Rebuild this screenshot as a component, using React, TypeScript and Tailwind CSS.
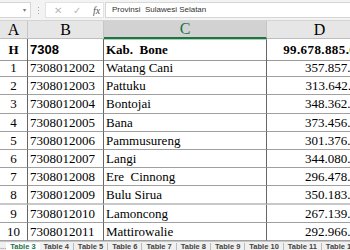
import React from "react";

const rows = [
  ["1", "7308012002", "Watang Cani", "357.857.214"],
  ["2", "7308012003", "Pattuku", "313.642.118"],
  ["3", "7308012004", "Bontojai", "348.362.905"],
  ["4", "7308012005", "Bana", "373.456.310"],
  ["5", "7308012006", "Pammusureng", "301.376.842"],
  ["6", "7308012007", "Langi", "344.080.127"],
  ["7", "7308012008", "Ere  Cinnong", "296.478.653"],
  ["8", "7308012009", "Bulu Sirua", "350.183.479"],
  ["9", "7308012010", "Lamoncong", "267.139.566"],
  ["10", "7308012011", "Mattirowalie", "292.966.031"],
];

const tabs = ["Table 4", "Table 5", "Table 6", "Table 7", "Table 8", "Table 9", "Table 10", "Table 11", "Table 12"];

const cols = "grid grid-cols-[28px_76px_163px_105px]";
const serif = "font-['Liberation_Serif',serif]";

export default function App() {
  return (
    <div className="w-[350px] h-[250px] overflow-hidden bg-white flex flex-col text-black">
      {/* formula bar */}
      <div className="h-[21px] shrink-0 bg-[#f3f3f3] flex items-center border-b border-[#d4d4d4] font-['Liberation_Sans',sans-serif]">
        <div className="w-[31px] h-[16px] bg-white border border-l-0 border-[#d6d6d6] flex items-center justify-end pr-[4px] text-[6px] text-[#777]">▾</div>
        <div className="w-[14px] flex flex-col items-center gap-[2px]">
          <span className="w-[1px] h-[1px] bg-[#aaa]" />
          <span className="w-[1px] h-[1px] bg-[#aaa]" />
          <span className="w-[1px] h-[1px] bg-[#aaa]" />
        </div>
        <div className="w-[59px] h-[16px] bg-white border border-[#e2e2e2] flex items-center text-[#b8b8b8] text-[10px]">
          <span className="ml-[8px]">✕</span>
          <span className="ml-[11px]">✓</span>
          <span className={`ml-[12px] text-[#555] italic text-[10px] ${serif}`}>fx</span>
        </div>
        <div className="flex-1 h-[16px] ml-[1px] bg-white border border-r-0 border-[#d6d6d6] flex items-center pl-[6px] text-[8px] text-[#333]">
          Provinsi&nbsp; Sulawesi Selatan
        </div>
      </div>

      {/* column headers */}
      <div className={`${cols} h-[18px] shrink-0 bg-[#e6e6e6] text-[16px] leading-none ${serif}`}>
        <div className="flex items-center justify-center border-r border-[#c6c6c6] border-b border-b-[#bdbdbd]">A</div>
        <div className="flex items-center justify-center border-r border-[#c6c6c6] border-b border-b-[#bdbdbd]">B</div>
        <div className="flex items-center justify-center bg-[#d2d2d2] text-[#217346] border-r border-[#c6c6c6] border-b-2 border-b-[#217346]">C</div>
        <div className="flex items-center justify-center border-b border-[#bdbdbd]">D</div>
      </div>

      {/* header data row */}
      <div className={`${cols} h-[20px] shrink-0 text-[13px] font-bold ${serif}`}>
        <div className="flex items-center justify-center border-r border-[#666] border-b border-b-[#9a9a9a]">H</div>
        <div className="flex items-center pl-[2px] border-r border-[#666] border-b border-b-[#9a9a9a] font-['Liberation_Sans',sans-serif]">7308</div>
        <div className="flex items-center pl-[2px] border-r border-[#666] border-b border-b-[#9a9a9a] border-t border-t-[#a8d5b8]">Kab.&nbsp; Bone</div>
        <div className="flex items-center justify-end pr-[2px] border-b border-[#9a9a9a] tracking-[0.4px]">99.678.885.018</div>
      </div>

      {rows.map((r, i) => {
        const bb = i === 7 ? "border-b-2 border-b-[#c8c8c8]" : "border-b border-b-[#a0a0a0]";
        return (
          <div key={r[0]} className={`${cols} h-[18.2px] shrink-0 text-[13px] leading-none ${serif}`}>
            <div className={`flex items-center justify-center border-r border-[#666] ${bb}`}>{r[0]}</div>
            <div className={`flex items-center pl-[2px] border-r border-[#666] ${bb}`}>{r[1]}</div>
            <div className={`flex items-center pl-[2px] whitespace-pre border-r border-[#666] ${bb}`}>{r[2]}</div>
            <div className={`flex items-center justify-end pr-[2px] ${bb}`}>{r[3]}</div>
          </div>
        );
      })}

      {/* sheet tabs */}
      <div className="flex-1 min-h-0 bg-[#f0f0f0] flex items-start pt-[1px] text-[7.5px] font-bold text-[#444] font-['Liberation_Sans',sans-serif] whitespace-nowrap border-t border-[#c6c6c6]">
        <span className="w-[18px] text-center text-[#999] leading-[8px]">...</span>
        <span className="px-[4px] bg-white text-[#217346] leading-[8px]">Table 3</span>
        {tabs.map((t) => (
          <span key={t} className="px-[4px] leading-[8px] border-r border-[#bbb]">{t}</span>
        ))}
      </div>
    </div>
  );
}
